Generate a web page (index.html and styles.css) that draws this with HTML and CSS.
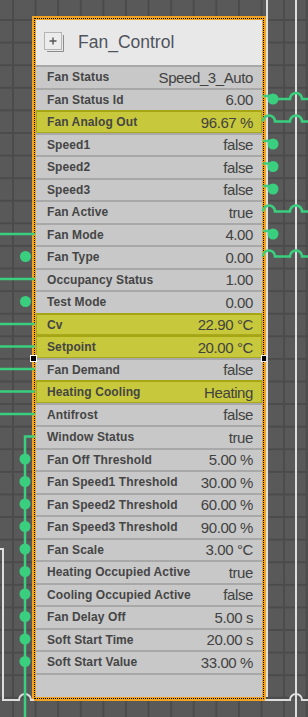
FILE: index.html
```html
<!doctype html>
<html lang="en">
<head>
  <meta charset="utf-8">
  <title>Fan_Control</title>
  <link rel="stylesheet" href="styles.css">
</head>
<body>
  <div class="canvas">
    <div class="node">
      <div class="frame">
        <div class="panel">
          <div class="header">
            <svg class="expand" width="20" height="21" viewBox="0 0 20 21">
              <rect x="0.5" y="0.5" width="17" height="17" fill="#ececec" stroke="#b4b4b4"/>
              <path d="M3 19.5 H19.5 V3" fill="none" stroke="#8c8c8c"/>
              <path d="M9 5.5 V12.5 M5.5 9 H12.5" stroke="#555" stroke-width="1.4"/>
            </svg>
            <span class="title">Fan_Control</span>
          </div>
          <div class="row"><span class="label">Fan Status</span><span class="value">Speed_3_Auto</span></div>
          <div class="row"><span class="label">Fan Status Id</span><span class="value">6.00</span></div>
          <div class="row hl"><span class="label">Fan Analog Out</span><span class="value">96.67 %</span></div>
          <div class="row"><span class="label">Speed1</span><span class="value">false</span></div>
          <div class="row"><span class="label">Speed2</span><span class="value">false</span></div>
          <div class="row"><span class="label">Speed3</span><span class="value">false</span></div>
          <div class="row"><span class="label">Fan Active</span><span class="value">true</span></div>
          <div class="row"><span class="label">Fan Mode</span><span class="value">4.00</span></div>
          <div class="row"><span class="label">Fan Type</span><span class="value">0.00</span></div>
          <div class="row"><span class="label">Occupancy Status</span><span class="value">1.00</span></div>
          <div class="row"><span class="label">Test Mode</span><span class="value">0.00</span></div>
          <div class="row hl"><span class="label">Cv</span><span class="value">22.90 °C</span></div>
          <div class="row hl"><span class="label">Setpoint</span><span class="value">20.00 °C</span></div>
          <div class="row"><span class="label">Fan Demand</span><span class="value">false</span></div>
          <div class="row hl"><span class="label">Heating Cooling</span><span class="value">Heating</span></div>
          <div class="row"><span class="label">Antifrost</span><span class="value">false</span></div>
          <div class="row"><span class="label">Window Status</span><span class="value">true</span></div>
          <div class="row"><span class="label">Fan Off Threshold</span><span class="value">5.00 %</span></div>
          <div class="row"><span class="label">Fan Speed1 Threshold</span><span class="value">30.00 %</span></div>
          <div class="row"><span class="label">Fan Speed2 Threshold</span><span class="value">60.00 %</span></div>
          <div class="row"><span class="label">Fan Speed3 Threshold</span><span class="value">90.00 %</span></div>
          <div class="row"><span class="label">Fan Scale</span><span class="value">3.00 °C</span></div>
          <div class="row"><span class="label">Heating Occupied Active</span><span class="value">true</span></div>
          <div class="row"><span class="label">Cooling Occupied Active</span><span class="value">false</span></div>
          <div class="row"><span class="label">Fan Delay Off</span><span class="value">5.00 s</span></div>
          <div class="row"><span class="label">Soft Start Time</span><span class="value">20.00 s</span></div>
          <div class="row"><span class="label">Soft Start Value</span><span class="value">33.00 %</span></div>
          <div class="row empty"></div>
        </div>
      </div>
      <span class="handle handle-left"></span>
      <span class="handle handle-right"></span>
    </div>

    <svg class="wires" width="308" height="717" viewBox="0 0 308 717">
      <!-- white links -->
      <g fill="none" stroke="#dedede" stroke-width="2">
        <path d="M267 0 V697"/>
        <path d="M296 0 V717"/>
        <path d="M0 549 H3 V700 H19 A6 6 0 0 1 31 700 H34"/>
        <path d="M265 700 H290 A6 6 0 0 1 302 700 H308"/>
      </g>
      <!-- green links -->
      <g fill="none" stroke="#3acf7f" stroke-width="2.5">
        <path d="M270 99 H290 A6 6 0 0 1 302 99 H308"/>
        <path d="M263 121.5 A6 6 0 0 1 275 121.5 H290 A6 6 0 0 1 302 121.5 H308"/>
        <path d="M263 211.5 A6 6 0 0 1 275 211.5 H290 A6 6 0 0 1 302 211.5 H308"/>
        <path d="M263 256.5 A6 6 0 0 1 275 256.5 H290 A6 6 0 0 1 302 256.5 H308"/>
        <path d="M263 96 H270 M263 141 H270 M263 163.5 H270 M263 186 H270 M263 231 H270"/>
        <path d="M0 234 H35 M0 279 H35 M0 324 H35 M0 346.5 H35 M0 369 H35 M0 391.5 H35 M0 414 H35"/>
        <path d="M35 436.5 H25 V717"/>
      </g>
      <g fill="#3acf7f">
        <circle cx="273" cy="99" r="5.5"/>
        <circle cx="273" cy="144" r="5.5"/>
        <circle cx="273" cy="166.5" r="5.5"/>
        <circle cx="273" cy="189" r="5.5"/>
        <circle cx="273" cy="234" r="5.5"/>
        <circle cx="25.5" cy="256.5" r="5.5"/>
        <circle cx="25.5" cy="301.5" r="5.5"/>
        <circle cx="25" cy="459" r="5.5"/>
        <circle cx="25" cy="481.5" r="5.5"/>
        <circle cx="25" cy="504" r="5.5"/>
        <circle cx="25" cy="526.5" r="5.5"/>
        <circle cx="25" cy="549" r="5.5"/>
        <circle cx="25" cy="571.5" r="5.5"/>
        <circle cx="25" cy="594" r="5.5"/>
        <circle cx="25" cy="616.5" r="5.5"/>
        <circle cx="25" cy="639" r="5.5"/>
        <circle cx="25" cy="661.5" r="5.5"/>
      </g>
    </svg>
  </div>
</body>
</html>
```

FILE: styles.css
```css
body {
  margin: 0;
  font-family: "Liberation Sans", Arial, sans-serif;
}

.canvas {
  position: relative;
  width: 308px;
  height: 717px;
  overflow: hidden;
  background-color: #595959;
  background-image:
    linear-gradient(to right, #4b4b4b 0 2px, transparent 2px),
    linear-gradient(to bottom, #4b4b4b 0 2px, transparent 2px);
  background-size: 22.6px 22.6px;
  background-position: 12px 19px;
}

/* the node sits on the free canvas */
.node {
  position: absolute;
  left: 32px;
  top: 16px;
  width: 234px;
  height: 685px;
  box-sizing: border-box;
  padding: 2px;
  background: #f0a422;
}
.frame {
  height: 100%;
  box-sizing: border-box;
  border: 1px dotted #000;
  padding: 1px;
}
.panel {
  height: 100%;
  display: flex;
  flex-direction: column;
  background: #c8c8c8;
}

.header {
  height: 45px;
  flex: none;
  display: flex;
  align-items: center;
  padding-left: 8px;
  background: #e8e8e8;
}
.expand {
  display: block;
}
.title {
  margin-left: 14px;
  font-size: 17.5px;
  color: #4f545c;
}

.row {
  height: 22.5px;
  flex: none;
  box-sizing: border-box;
  display: flex;
  align-items: center;
  justify-content: space-between;
  padding: 0 9px 0 11px;
  border-top: 2px solid #a8a8a8;
  white-space: nowrap;
}
.row.hl {
  background: #c8c83c;
  border-top-color: #a6a614;
  box-shadow: inset 1px 0 #a9a920, inset -1px 0 #a9a920, inset 0 -1px #a9a920;
}
.row.empty {
  flex: 1;
}
.label {
  font-size: 12px;
  font-weight: bold;
  color: #454545;
  letter-spacing: 0.1px;
}
.value {
  font-size: 15px;
  color: #424242;
  letter-spacing: -0.4px;
}

.handle {
  position: absolute;
  top: 339px;
  width: 5px;
  height: 5px;
  background: #000;
  border: 1px solid #fff;
}
.handle-left {
  left: -2px;
}
.handle-right {
  right: -2px;
}

.wires {
  position: absolute;
  left: 0;
  top: 0;
}
```
